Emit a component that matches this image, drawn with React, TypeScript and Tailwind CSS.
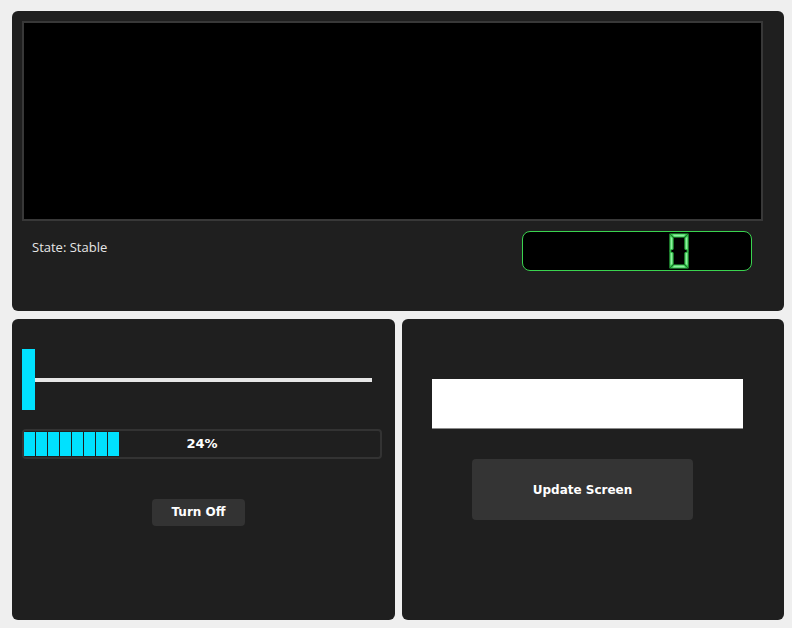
export default function App() {
  const chunks = [0, 1, 2, 3, 4, 5, 6, 7];

  return (
    <div className="w-[792px] h-[628px] bg-[#efefef] pt-[11px] pl-[12px] pr-[8px] pb-[8px] flex flex-col gap-[8px] font-['Open_Sans',sans-serif]">
      {/* top panel */}
      <div className="h-[300px] bg-[#1f1f1f] rounded-[6px] pt-[10px] pl-[10px] pr-[21px] flex flex-col">
        <div className="h-[200px] w-[741px] bg-black border-2 border-[#383838]" />
        <div className="flex mt-[10px]">
          <div className="pl-[10px] pt-[7px] text-[13px] text-[#e6e6e6]">State: Stable</div>
          <div className="ml-auto mr-[11px] w-[230px] h-[40px] bg-black border border-[#3ad34f] rounded-[8px] flex items-center pl-[146px]">
            <svg width="20" height="36" viewBox="0 0 20 36">
              <g fill="#8ef0a0" stroke="#2fbf47" strokeWidth="1.2">
                <polygon points="2,1 18,1 15,4 5,4" />
                <polygon points="1,2 4,5 4,16 1,17.5" />
                <polygon points="19,2 16,5 16,16 19,17.5" />
                <polygon points="1,18.5 4,20 4,31 1,34" />
                <polygon points="19,18.5 16,20 16,31 19,34" />
                <polygon points="5,32 15,32 18,35 2,35" />
              </g>
            </svg>
          </div>
        </div>
      </div>

      {/* bottom panels */}
      <div className="flex-1 grid grid-cols-[383px_382px] gap-[7px]">
        <div className="bg-[#1f1f1f] rounded-[6px] pt-[30px] pl-[10px] flex flex-col">
          <div className="flex items-center h-[61px]">
            <div className="w-[13px] h-[61px] bg-[#00e1ff]" />
            <div className="w-[337px] h-[4px] bg-[#e6e6e6]" />
          </div>
          <div className="mt-[19px] w-[360px] h-[30px] border-2 border-[#333333] rounded-[4px] relative flex items-center gap-[1px]">
            {chunks.map((c) => (
              <div key={c} className="w-[11px] h-[24px] bg-[#00e1ff]" />
            ))}
            <span className="absolute inset-0 flex items-center justify-center text-[13px] font-bold text-white font-['DejaVu_Sans',sans-serif]">
              24%
            </span>
          </div>
          <div className="mt-[39px] pl-[130px]">
            <button className="w-[93px] h-[27px] bg-[#333333] rounded-[4px] text-white text-[12px] font-bold font-['DejaVu_Sans',sans-serif]">
              Turn Off
            </button>
          </div>
        </div>

        <div className="bg-[#1f1f1f] rounded-[6px] pt-[60px] pl-[30px] flex flex-col">
          <div className="w-[311px] h-[50px] bg-white border-b border-[#8a8a8a]" />
          <button className="mt-[30px] ml-[40px] w-[221px] h-[61px] bg-[#343434] rounded-[4px] text-white text-[12px] font-bold font-['DejaVu_Sans',sans-serif]">
            Update Screen
          </button>
        </div>
      </div>
    </div>
  );
}
